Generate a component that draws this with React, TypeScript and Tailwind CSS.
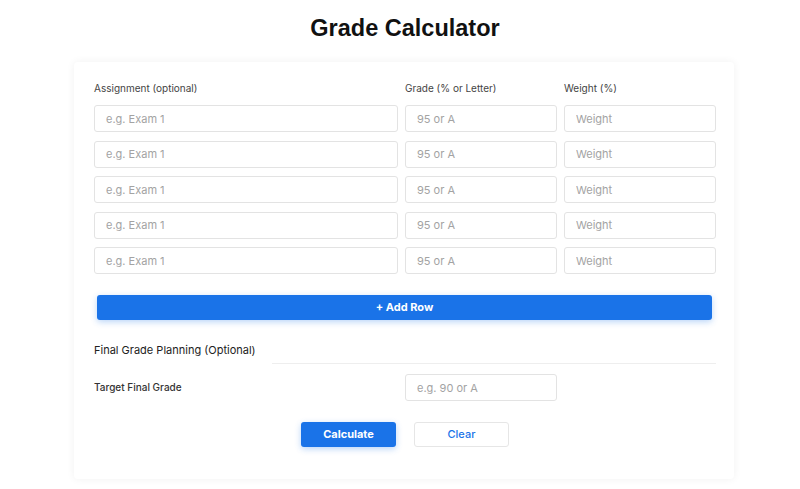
import React from "react";

const rows = [0, 1, 2, 3, 4];

function Field({ placeholder }: { placeholder: string }) {
  return (
    <input
      type="text"
      placeholder={placeholder}
      className="h-[27px] w-full rounded-[3px] border border-[#e3e3e3] bg-white px-[11px] text-[11px] text-gray-700 placeholder:text-[#a3a3a3] outline-none"
    />
  );
}

export default function App() {
  return (
    <div className="min-h-screen bg-white font-['Inter','Liberation_Sans',sans-serif]">
      <h1 className="pt-[14px] pl-[10px] text-center font-['Liberation_Sans',Arial,sans-serif] text-[23.5px] font-bold leading-[28px] text-[#111]">
        Grade Calculator
      </h1>

      {/* Card */}
      <div className="mx-auto mt-[20px] w-[660px] translate-x-[4px] rounded-[4px] bg-white px-[20px] pt-[19px] pb-[32px] shadow-[0_0_8px_rgba(0,0,0,0.06)]">
        <div className="grid grid-cols-[304px_152px_152px] gap-x-[7px] text-[10px] text-[#444]">
          <div>Assignment (optional)</div>
          <div>Grade (% or Letter)</div>
          <div>Weight (%)</div>
        </div>

        <div className="mt-[9px] flex flex-col gap-[8.5px]">
          {rows.map((r) => (
            <div key={r} className="grid grid-cols-[304px_152px_152px] gap-x-[7px]">
              <Field placeholder="e.g. Exam 1" />
              <Field placeholder="95 or A" />
              <Field placeholder="Weight" />
            </div>
          ))}
        </div>

        <button
          type="button"
          className="mx-[3px] mt-[21px] block h-[25px] w-[615px] rounded-[3px] bg-[#1a73e8] text-[11px] font-bold text-white shadow-[0_2px_6px_rgba(26,115,232,0.3)]"
        >
          + Add Row
        </button>

        <div className="mt-[22px] flex items-end">
          <h3 className="text-[11px] leading-[16px] text-[#222]">Final Grade Planning (Optional)</h3>
          <div className="ml-[16px] mr-[-2px] mb-[-6px] h-px flex-1 bg-[#eeeeee]" />
        </div>

        <div className="mt-[16px] grid grid-cols-[304px_152px_152px] items-center gap-x-[7px]">
          <div className="text-[10px] font-medium text-[#333]">Target Final Grade</div>
          <Field placeholder="e.g. 90 or A" />
        </div>

        <div className="mt-[21px] flex justify-center gap-[18px] pl-[2px]">
          <button
            type="button"
            className="h-[25px] w-[95px] rounded-[3px] bg-[#1a73e8] text-[11px] font-bold text-white shadow-[0_2px_6px_rgba(26,115,232,0.3)]"
          >
            Calculate
          </button>
          <button
            type="button"
            className="h-[25px] w-[95px] rounded-[3px] border border-[#e6e6e6] bg-white text-[11px] font-medium text-[#1a73e8]"
          >
            Clear
          </button>
        </div>
      </div>
    </div>
  );
}
